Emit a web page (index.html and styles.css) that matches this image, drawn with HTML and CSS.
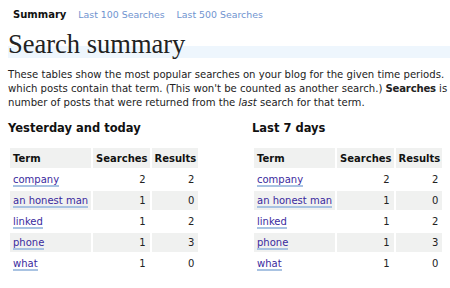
FILE: index.html
```html
<!DOCTYPE html>
<html lang="en">
<head>
    <meta charset="UTF-8">
    <link rel="stylesheet" href="styles.css">
    <title>Search summary</title>
</head>
<body>
    <ul class="tabs">
        <li class="current">Summary</li>
        <li><a href="#">Last 100 Searches</a></li>
        <li><a href="#">Last 500 Searches</a></li>
    </ul>
    <h1>Search summary</h1>
    <p class="intro">
        These tables show the most popular searches on your blog for the given time periods.<br>
        which posts contain that term. (This won't be counted as another search.) <b>Searches</b> is<br>
        number of posts that were returned from the <i>last</i> search for that term.
    </p>
    <div class="periods">
        <div class="period">
            <h2>Yesterday and today</h2>
            <table>
                <tr><th class="term">Term</th><th>Searches</th><th>Results</th></tr>
                <tr><td><a href="#">company</a></td><td class="num">2</td><td class="num">2</td></tr>
                <tr class="alt"><td><a href="#">an honest man</a></td><td class="num">1</td><td class="num">0</td></tr>
                <tr><td><a href="#">linked</a></td><td class="num">1</td><td class="num">2</td></tr>
                <tr class="alt"><td><a href="#">phone</a></td><td class="num">1</td><td class="num">3</td></tr>
                <tr><td><a href="#">what</a></td><td class="num">1</td><td class="num">0</td></tr>
            </table>
        </div>
        <div class="period">
            <h2>Last 7 days</h2>
            <table>
                <tr><th class="term">Term</th><th>Searches</th><th>Results</th></tr>
                <tr><td><a href="#">company</a></td><td class="num">2</td><td class="num">2</td></tr>
                <tr class="alt"><td><a href="#">an honest man</a></td><td class="num">1</td><td class="num">0</td></tr>
                <tr><td><a href="#">linked</a></td><td class="num">1</td><td class="num">2</td></tr>
                <tr class="alt"><td><a href="#">phone</a></td><td class="num">1</td><td class="num">3</td></tr>
                <tr><td><a href="#">what</a></td><td class="num">1</td><td class="num">0</td></tr>
            </table>
        </div>
    </div>
</body>
</html>
```

FILE: styles.css
```css
body{
    margin: 0;
    padding: 0 8px;
    background: #fff;
    color: #222;
    font-family: "DejaVu Sans", Verdana, sans-serif;
    font-size: 10px;
    overflow: hidden;
}

.tabs{
    list-style: none;
    margin: 0;
    padding: 8px 0 0 5px;
    display: flex;
    gap: 12px;
    height: 14px;
    line-height: 14px;
}

.tabs li.current{
    font-weight: bold;
    color: #111;
}

.tabs a{
    font-size: 9.4px;
    color: #6f93cf;
    text-decoration: none;
}

h1{
    font-family: "Liberation Serif", Georgia, serif;
    font-weight: normal;
    font-size: 26.5px;
    line-height: 28px;
    margin: 8px -8px 0 0;
    color: #222;
    background: linear-gradient(#fff 0, #fff 58%, #eef6fd 58%);
}

.intro{
    margin: 10px 0 0;
    font-size: 10.1px;
    line-height: 14px;
    white-space: nowrap;
}

.intro b{
    letter-spacing: -0.2px;
}

.periods{
    display: flex;
    margin-top: 10px;
}

.period:first-child{
    flex: 0 0 244px;
}

h2{
    font-size: 11.5px;
    margin: 0 0 10px;
    line-height: 16px;
    color: #111;
}

table{
    border-spacing: 2px;
    font-size: 10px;
}

th{
    background: #f0f1f0;
    height: 20px;
    padding: 0 2px 0 3px;
    text-align: right;
    color: #111;
}

th.term{
    text-align: left;
}

td{
    height: 19px;
    padding: 0 3px;
    white-space: nowrap;
}

tr.alt td{
    background: #f0f1f0;
}

td.num{
    text-align: right;
    padding-right: 4px;
}

td a{
    color: #3a2a9e;
    text-decoration: none;
    border-bottom: 2px solid #a9c3e2;
}
```
